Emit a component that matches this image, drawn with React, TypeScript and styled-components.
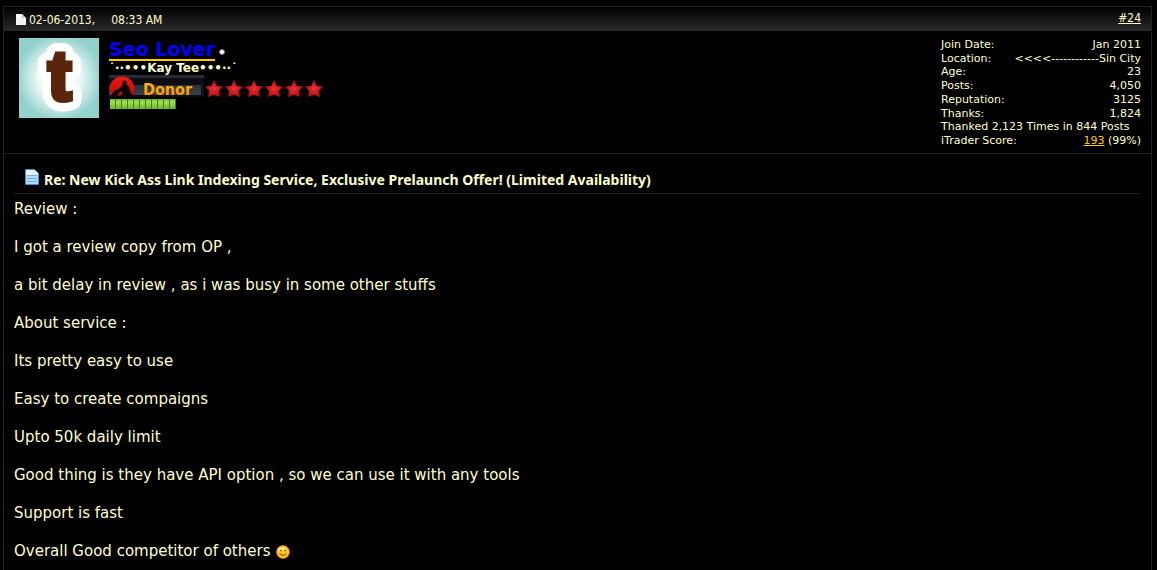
import React from "react";
import styled, { createGlobalStyle } from "styled-components";

const verdana = `Verdana, "DejaVu Sans", sans-serif`;
const tahoma = `Tahoma, "DejaVu Sans Condensed", "DejaVu Sans", sans-serif`;
const cream = "#ffffcc";
const line = "#222222";

const GlobalStyle = createGlobalStyle`
  * { box-sizing: border-box; }
  html, body { margin: 0; background: #000; }
  body { color: ${cream}; font-family: ${verdana}; }
`;

const Page = styled.main`
  padding: 6px 5px 0 3px;
`;

const Post = styled.article`
  min-height: calc(100vh - 6px);
  border: 1px solid ${line};
  border-bottom: 0;
`;

const PostHead = styled.header`
  display: flex;
  justify-content: space-between;
  height: 24px;
  padding: 0 10px 0 12px;
  background: linear-gradient(#000, #2a2a2a);
  font: 12px/24px ${tahoma};
`;

const Stamp = styled.time`
  display: flex;
  align-items: center;
  padding-top: 1px;
`;

const Clock = styled.span`
  margin-left: 16px;
`;

const PostNumber = styled.a`
  color: ${cream};
  line-height: 22px;
`;

const UserPanel = styled.section`
  display: flex;
  gap: 10px;
  height: 123px;
  padding: 7px 10px 6px 15px;
  border-bottom: 1px solid ${line};
`;

const Avatar = styled.svg`
  display: block;
  flex: none;
`;

const Identity = styled.div`
  flex: 1;
  display: flex;
  flex-direction: column;
  align-items: flex-start;
`;

const NameRow = styled.div`
  display: flex;
  align-items: center;
  gap: 4px;
  height: 24px;
`;

const UserName = styled.a`
  border-bottom: 2px solid #ffcc00;
  color: #0000ff;
  font: bold 19px/20px ${verdana};
  text-decoration: none;
`;

const StatusDot = styled.span`
  width: 6px;
  height: 6px;
  margin-top: 4px;
  border: 1px solid #777;
  border-radius: 50%;
  background: #fff;
`;

const UserTitle = styled.div`
  font: bold 12px/13px ${verdana};
`;

const RankRow = styled.div`
  display: flex;
  align-items: flex-end;
`;

const Stats = styled.dl`
  display: flex;
  flex-direction: column;
  justify-content: space-between;
  width: 200px;
  margin: 0;
  font: 11px/13px ${verdana};
`;

const Stat = styled.div`
  display: flex;
  justify-content: space-between;
  white-space: nowrap;
`;

const StatName = styled.dt``;

const StatValue = styled.dd`
  margin: 0;
`;

const ScoreLink = styled.a`
  color: #ffcc00;
`;

const Content = styled.section`
  padding: 12px 10px;
`;

const Title = styled.h1`
  display: flex;
  align-items: center;
  gap: 4px;
  height: 28px;
  margin: 0;
  padding-left: 10px;
  border-bottom: 1px solid ${line};
  font: bold 14px/28px "Noto Sans", sans-serif;
`;

const PageIcon = styled.svg`
  margin-bottom: 5px;
`;

const Message = styled.div`
  padding-top: 6px;
  font: 15px/19px ${verdana};
`;

const Paragraph = styled.p`
  margin: 0 0 19px;
`;

const Smiley = styled.svg`
  vertical-align: -3px;
`;

function AvatarPicture() {
  return (
    <Avatar width="80" height="80" viewBox="0 0 80 80" role="img" aria-label="Avatar">
      <defs>
        <radialGradient id="glow" cx="50%" cy="50%" r="56%">
          <stop offset="0.45" stopColor="#f0faf9" />
          <stop offset="0.95" stopColor="#92d1cc" />
        </radialGradient>
      </defs>
      <rect width="80" height="80" fill="url(#glow)" />
      <g fontFamily="Liberation Sans, Arial, sans-serif" fontWeight="bold" fontSize="70" strokeLinejoin="round">
        <text x="29" y="62" fill="#fff" stroke="#fff" strokeWidth="22">t</text>
        <text x="29" y="62" fill="#5a250b" stroke="#5a250b" strokeWidth="5" strokeLinejoin="miter" aria-hidden="true">t</text>
      </g>
    </Avatar>
  );
}

function DonorBadge() {
  return (
    <svg width="95" height="24" viewBox="0 0 95 24" role="img" aria-label="Donor">
      <defs>
        <linearGradient id="bar" x1="0" y1="0" x2="0" y2="1">
          <stop offset="0" stopColor="#2c303b" />
          <stop offset="1" stopColor="#3a3f4c" />
        </linearGradient>
        <linearGradient id="gold" x1="0" y1="0" x2="0" y2="1">
          <stop offset="0" stopColor="#ffc400" />
          <stop offset="1" stopColor="#ff8a00" />
        </linearGradient>
        <linearGradient id="disc" x1="0" y1="0" x2="0" y2="1">
          <stop offset="0" stopColor="#f01a10" />
          <stop offset="1" stopColor="#a80804" />
        </linearGradient>
        <clipPath id="badge">
          <rect width="95" height="22" />
        </clipPath>
      </defs>
      <g clipPath="url(#badge)">
        <rect width="95" height="22" fill="#0b0d13" />
        <rect width="95" height="3" fill="#2a2c35" />
        <rect y="10" width="95" height="10" fill="url(#bar)" />
        <rect x="92" y="9" width="3" height="12" fill="#10131c" />
        <circle cx="13" cy="14" r="12.500" fill="url(#disc)" />
        <path
          d="M2 21 L5 16 L9 14 L13 11 L13.500 7.500 L15 5.500 L17.500 6.500 L17.500 9.500 L20 12 L21 17 L24 20 L22 24 H4 Z"
          fill="#0a0507"
        />
        <path d="M8 20 L12 16 L14 18 L11 21 Z" fill="#b80d08" />
      </g>
      <text x="34" y="20" fill="url(#gold)" fontFamily="DejaVu Sans Condensed, sans-serif" fontWeight="bold" fontSize="16">
        Donor
      </text>
    </svg>
  );
}

function Stars() {
  return (
    <svg width="120" height="20" viewBox="0 0 120 20" role="img" aria-label="6 stars">
      <defs>
        <radialGradient id="star">
          <stop offset="0" stopColor="#e83232" />
          <stop offset="1" stopColor="#b40a0a" />
        </radialGradient>
      </defs>
      {[0, 1, 2, 3, 4, 5].map((i) => (
        <path
          key={i}
          transform={`translate(${i * 20} 1)`}
          d="M10 0 L12.800 6 L19 6.500 L14.800 11 L16 17 L10 14.800 L4 17 L5.200 11 L1 6.500 L7.200 6 Z"
          fill="url(#star)"
        />
      ))}
    </svg>
  );
}

function Reputation() {
  return (
    <svg width="67" height="11" viewBox="0 0 67 11" role="img" aria-label="Reputation power">
      <defs>
        <linearGradient id="pip" x1="0" y1="0" x2="0" y2="1">
          <stop offset="0" stopColor="#6fb53a" />
          <stop offset="0.3" stopColor="#9fe04f" />
          <stop offset="1" stopColor="#6db52f" />
        </linearGradient>
      </defs>
      <rect x="1" y="0" width="66" height="10" fill="#457f22" />
      {Array.from({ length: 11 }, (_, i) => (
        <rect key={i} x={1 + i * 6} y="0" width="5" height="10" fill="url(#pip)" />
      ))}
    </svg>
  );
}

const stats: [string, React.ReactNode][] = [
  ["Join Date:", "Jan 2011"],
  ["Location:", "<<<<------------Sin City"],
  ["Age:", "23"],
  ["Posts:", "4,050"],
  ["Reputation:", "3125"],
  ["Thanks:", "1,824"],
  ["Thanked 2,123 Times in 844 Posts", ""],
  ["iTrader Score:", <><ScoreLink href="#itrader">193</ScoreLink> (99%)</>],
];

const message = [
  "Review :",
  "I got a review copy from OP ,",
  "a bit delay in review , as i was busy in some other stuffs",
  "About service :",
  "Its pretty easy to use",
  "Easy to create compaigns",
  "Upto 50k daily limit",
  "Good thing is they have API option , so we can use it with any tools",
  "Support is fast",
];

export default function App() {
  return (
    <Page>
      <GlobalStyle />
      <Post>
        <PostHead>
          <Stamp>
            <svg width="13" height="12" viewBox="0 0 13 12" aria-hidden="true">
              <path d="M0 0 H6 L10 4 V11 H0 Z" fill="#f4f4f4" />
              <path d="M6 0 V4 H10 Z" fill="#c8c8c8" />
            </svg>
            02-06-2013,<Clock>08:33 AM</Clock>
          </Stamp>
          <PostNumber href="#post24">#24</PostNumber>
        </PostHead>
        <UserPanel>
          <AvatarPicture />
          <Identity>
            <NameRow>
              <UserName href="#member">Seo Lover</UserName>
              <StatusDot />
            </NameRow>
            <UserTitle>˙··•••Kay Tee•••··˙</UserTitle>
            <RankRow>
              <DonorBadge />
              <Stars />
            </RankRow>
            <Reputation />
          </Identity>
          <Stats>
            {stats.map(([name, value]) => (
              <Stat key={name}>
                <StatName>{name}</StatName>
                <StatValue>{value}</StatValue>
              </Stat>
            ))}
          </Stats>
        </UserPanel>
        <Content>
          <Title>
            <PageIcon width="16" height="18" viewBox="0 0 16 18" aria-hidden="true">
              <path d="M1.500 1.500 H10 L14.500 5.500 V16.500 H1.500 Z" fill="#b5dcfb" stroke="#4f86cf" />
              <path d="M2 2 H9.500 V6 H14 V7 H2 Z" fill="#e8f3fe" />
              <path d="M3 7.500 H13 M3 10.500 H13 M3 13.500 H13" stroke="#5fb0f2" />
              <path d="M10 1.500 V5.500 H14.500 Z" fill="#fff" />
            </PageIcon>
            Re: New Kick Ass Link Indexing Service, Exclusive Prelaunch Offer! (Limited Availability)
          </Title>
          <Message>
            {message.map((text) => (
              <Paragraph key={text}>{text}</Paragraph>
            ))}
            <Paragraph>
              Overall Good competitor of others{" "}
              <Smiley width="15" height="14" viewBox="0 0 15 14" role="img" aria-label="Smile">
                <circle cx="8" cy="7" r="6.500" fill="#fdc62b" stroke="#b86a08" />
                <ellipse cx="7" cy="4" rx="4" ry="2" fill="#ffe684" />
                <circle cx="6" cy="5.500" r="0.8" fill="#5b3200" />
                <circle cx="10" cy="5.500" r="0.8" fill="#5b3200" />
                <path d="M4.500 8.500 Q8 12 11.500 8.500" fill="none" stroke="#6b3f00" />
              </Smiley>
            </Paragraph>
          </Message>
        </Content>
      </Post>
    </Page>
  );
}
